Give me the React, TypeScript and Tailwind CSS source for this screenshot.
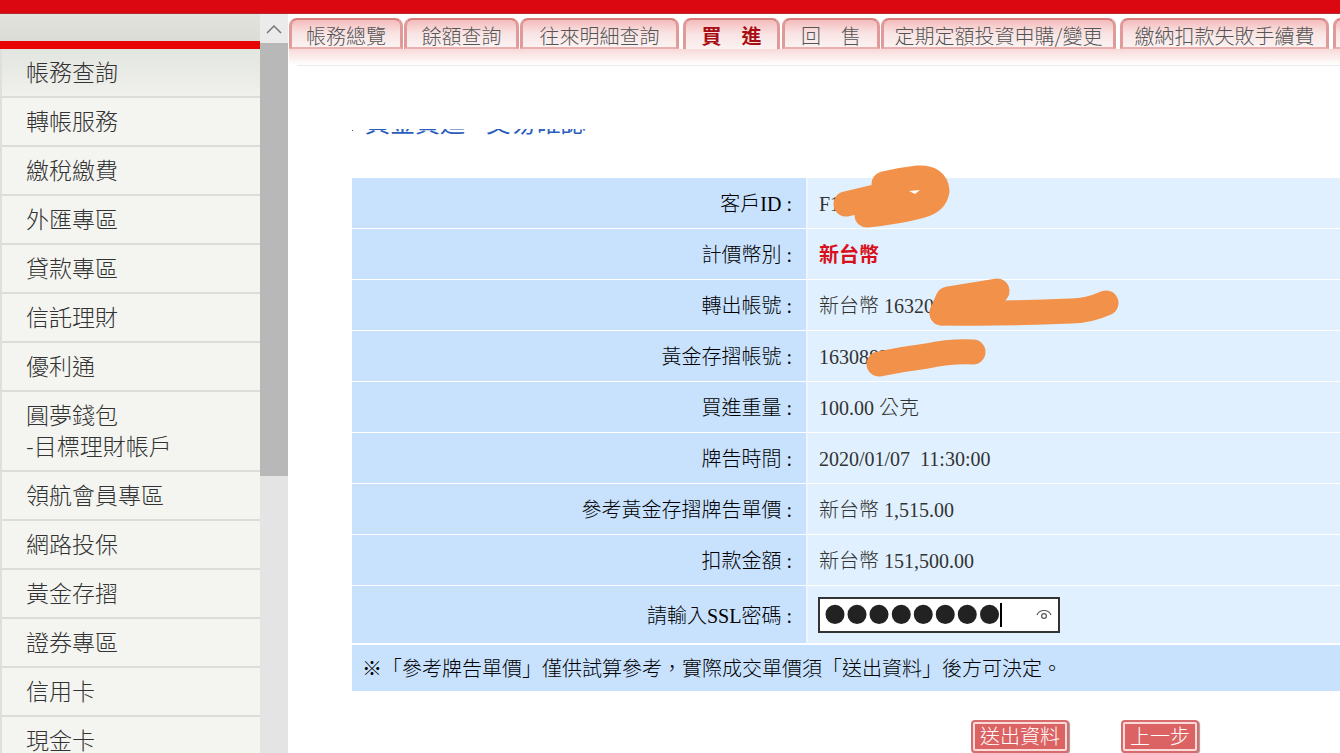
import { useState } from 'react';
import type { ReactNode } from 'react';
import clsx from 'clsx';

interface Tab {
  label: string;
  size: string;
  active?: boolean;
}

const tabs: Tab[] = [
  { label: '帳務總覽', size: 'w-[114px] mr-px' },
  { label: '餘額查詢', size: 'w-[115px] mr-px' },
  { label: '往來明細查詢', size: 'w-[159px] mr-1' },
  { label: '買　進', size: 'w-[97px] mr-0.5', active: true },
  { label: '回　售', size: 'w-[98px] mr-px' },
  { label: '定期定額投資申購/變更', size: 'w-[235px] mr-1' },
  { label: '繳納扣款失敗手續費', size: 'w-[209px] mr-1' },
  { label: '', size: 'w-[114px]' },
];

const menu = [
  '帳務查詢',
  '轉帳服務',
  '繳稅繳費',
  '外匯專區',
  '貸款專區',
  '信託理財',
  '優利通',
  '圓夢錢包\n-目標理財帳戶',
  '領航會員專區',
  '網路投保',
  '黃金存摺',
  '證券專區',
  '信用卡',
  '現金卡',
];

function Sidebar() {
  return (
    <aside className="flex w-[288px] shrink-0">
      <div className="min-w-0 flex-1 overflow-hidden bg-[#f4f5f1]">
        <div className="h-[27px] bg-linear-to-b from-[#e3e3de] to-[#dcdcd7]" />
        <div className="h-2 bg-[#e80303]" />
        <ul className="border-l-2 border-[#dfdfdf]">
          {menu.map((item, i) => (
            <li key={item} className="border-b-2 border-[#dcdcdb]">
              <a
                href="#"
                className={clsx(
                  'block whitespace-pre-line px-6 pt-[7px] pb-[9px] text-[23px] leading-[31px] font-light text-[#333]',
                  i === 0 && 'bg-linear-to-b from-[#e3e5e0] to-[#f0f1ed]',
                )}
              >
                {item}
              </a>
            </li>
          ))}
        </ul>
      </div>
      <div className="flex w-7 shrink-0 flex-col bg-[#e4e4e4]">
        <button type="button" aria-label="向上捲動" className="flex h-[29px] shrink-0 items-center justify-center bg-[#ebebeb]">
          <svg width="16" height="10" viewBox="0 0 16 10" fill="none" stroke="#777" strokeWidth="1.5">
            <path d="M1 9 L8 2 L15 9" />
          </svg>
        </button>
        <div className="flex-1">
          <div className="h-[61%] bg-[#b8b8b8]" />
        </div>
      </div>
    </aside>
  );
}

function TabBar() {
  return (
    <nav className="ml-px">
      <div className="flex overflow-hidden pt-1">
        {tabs.map((tab) => (
          <a
            key={tab.label}
            href="#"
            className={clsx(
              'h-[31px] shrink-0 overflow-hidden rounded-t-lg border-x-3 border-t-2 border-x-[#e09a9a] border-t-[#d97c7c] bg-linear-to-b from-[#f4bcbc] via-[#f9e4e4] to-[#fbf2f2] text-center text-xl leading-[32px] whitespace-nowrap',
              tab.active
                ? 'font-bold text-[#a80d12]'
                : 'border-b-2 border-b-[#eab0b0] font-light text-[#555]',
              tab.size,
            )}
          >
            {tab.label}
          </a>
        ))}
      </div>
      <div className="h-4 bg-linear-to-b from-[#f8d9d9] to-white" />
      <div className="ml-2 h-px bg-[#ececec]" />
    </nav>
  );
}

// Orange marker strokes that hide the personal numbers
function Marker({ children }: { children: ReactNode }) {
  return (
    <svg
      className="pointer-events-none absolute top-0 left-0 overflow-visible"
      width="320"
      height="50"
      fill="#f2914a"
      stroke="#f2914a"
      strokeWidth="25"
      strokeLinecap="round"
      strokeLinejoin="round"
      aria-hidden="true"
    >
      {children}
    </svg>
  );
}

function Row({ label, children }: { label: ReactNode; children: ReactNode }) {
  return (
    <tr className="h-[51px]">
      <th scope="row" className="w-[456px] border-r-2 border-b border-white border-r-[#eef6ff] bg-[#c8e2fe] pt-0.5 pr-3.5 text-right font-light text-black">
        {label} :
      </th>
      <td className="relative border-b border-white bg-[#e0f0fe] pt-0.5 pl-[11px] font-light whitespace-pre text-[#333]">{children}</td>
    </tr>
  );
}

function ConfirmTable() {
  const [password, setPassword] = useState('12345678');

  return (
    <table className="w-full border-separate border-spacing-0 text-xl leading-6 font-light">
      <tbody>
        <Row label="客戶ID">
          F1
          <Marker>
            <path d="M38 26 L76 17 L76 6 Q92 2 110 0 Q128 -1 129 13 Q127 24 112 28 Q90 34 59 37 L76 20" />
            <path d="M76 16 L100 20" />
            <path d="M101 13 L112 12 L107 16 Z" fill="#fff" stroke="none" />
          </Marker>
        </Row>
        <Row label="計價幣別">
          <strong className="font-bold text-[#d8101c]">新台幣</strong>
        </Row>
        <Row label="轉出帳號">
          新台幣 163200
          <Marker>
            <path d="M189 11 Q165 15 140 19 L134 33 L180 22" />
            <path d="M134 33 Q200 34 263 31 Q280 31 298 23" fill="none" />
          </Marker>
        </Row>
        <Row label="黃金存摺帳號">
          1630882
          <Marker>
            <path d="M71 33 Q95 28 119 25 Q142 20 165 21" fill="none" />
          </Marker>
        </Row>
        <Row label="買進重量">100.00 公克</Row>
        <Row label="牌告時間">2020/01/07  11:30:00</Row>
        <Row label="參考黃金存摺牌告單價">新台幣 1,515.00</Row>
        <Row label="扣款金額">新台幣 151,500.00</Row>
        <tr className="h-[59px]">
          <th scope="row" className="border-r-2 border-b-2 border-white border-r-[#eef6ff] bg-[#c8e2fe] pt-0.5 pr-3.5 text-right font-light text-black">
            <label htmlFor="ssl">請輸入SSL密碼 :</label>
          </th>
          <td className="border-b-2 border-white bg-[#e0f0fe] pl-[10px]">
            <div className="relative flex h-9 w-[242px] items-center border-2 border-[#333] bg-white">
              <input
                id="ssl"
                type="password"
                value={password}
                onChange={(e) => setPassword(e.target.value)}
                className="h-8 w-[200px] pl-1 text-[63px] leading-8 text-[#222] caret-transparent outline-none [-webkit-text-stroke:4px_#222]"
              />
              <span className="absolute top-1 left-[180px] h-6 w-0.5 bg-black" />
              <button type="button" aria-label="顯示密碼" className="ml-4">
                <svg width="16" height="12" viewBox="0 0 16 12" fill="none" stroke="#555" strokeWidth="1.2">
                  <path d="M1 6 Q3 1.5 8 1.5 Q13 1.5 15 6" />
                  <circle cx="8" cy="7" r="2.4" />
                </svg>
              </button>
            </div>
          </td>
        </tr>
        <tr className="h-[46px]">
          <td colSpan={2} className="bg-[#c8e2fe] pt-0.5 pl-[10px] text-black">
            ※「參考牌告單價」僅供試算參考，實際成交單價須「送出資料」後方可決定。
          </td>
        </tr>
      </tbody>
    </table>
  );
}

function FormButton({ children }: { children: ReactNode }) {
  return (
    <button
      type="button"
      className="rounded-sm border-2 border-[#d86c6c] bg-[#fbdada] p-0.5 shadow-[1px_1px_1px_#999]"
    >
      <span className="block bg-[#dc6363] px-[5px] pt-px text-xl leading-6 font-light text-white">{children}</span>
    </button>
  );
}

export default function App() {
  return (
    <div className="flex h-screen flex-col overflow-hidden bg-white font-['Noto_Sans_CJK_TC',sans-serif]">
      <header className="h-3.5 shrink-0 border-b border-[#b02a30] bg-[#dc0811]" />
      <div className="flex min-h-0 flex-1">
        <Sidebar />
        <main className="min-w-0 flex-1 overflow-hidden">
          <TabBar />
          <div className="pt-[63px] pl-16 font-['Liberation_Serif','Noto_Sans_CJK_TC',serif]">
            <div className="flex h-1.5 items-end overflow-hidden">
              <span className="mr-3 mb-1 h-px w-px bg-[#555]" />
              <h1 className="text-[25px] leading-[22px] whitespace-pre text-[#2a5dbd]">黃金買進 - 交易確認</h1>
            </div>
            <div className="pt-[43px]">
              <ConfirmTable />
            </div>
            <div className="flex gap-[52px] pt-[29px] pl-[619px]">
              <FormButton>送出資料</FormButton>
              <FormButton>上一步</FormButton>
            </div>
          </div>
        </main>
      </div>
    </div>
  );
}
